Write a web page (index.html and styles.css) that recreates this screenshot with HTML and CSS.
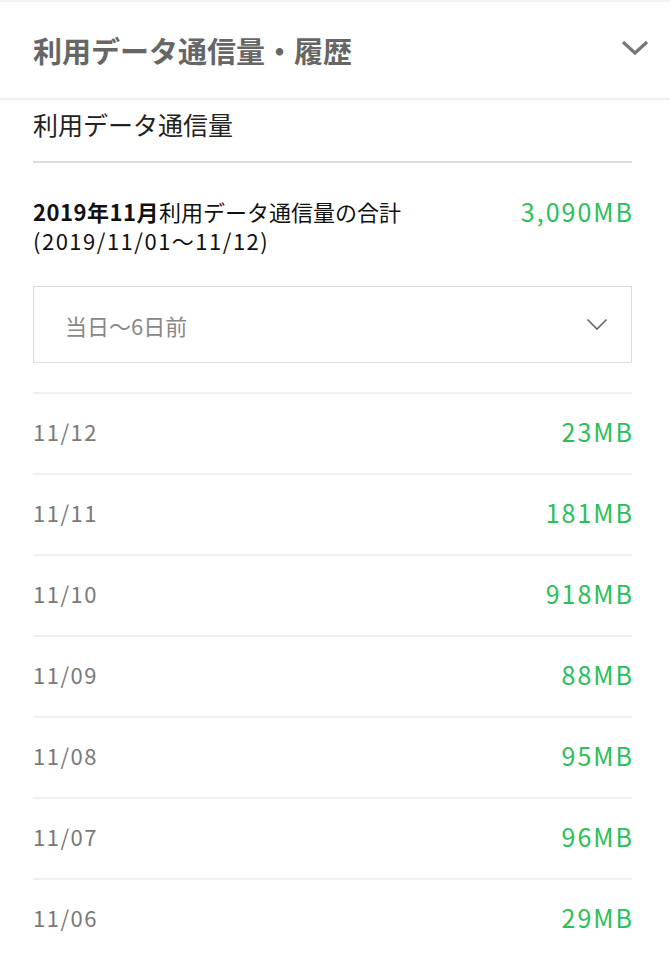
FILE: index.html
```html
<!DOCTYPE html>
<html lang="ja">
<head>
  <meta charset="UTF-8" />
  <meta name="viewport" content="width=device-width,initial-scale=1" />
  <title>利用データ通信量・履歴</title>
  <link rel="stylesheet" href="styles.css">
</head>
<body>
  <header class="panel-head">
    <h1>利用データ通信量・履歴</h1>
    <svg class="head-chevron" width="28" height="16" viewBox="0 0 28 16">
      <polyline points="2,2 14,13 26,2" fill="none" stroke="#777" stroke-width="3.2" />
    </svg>
  </header>

  <main class="usage">
    <h2 class="usage-title">利用データ通信量</h2>

    <div class="summary">
      <p class="summary-label"><b>2019年11月</b>利用データ通信量の合計<br><span class="period">(2019/11/01〜11/12)</span></p>
      <span class="amount total">3,090MB</span>
    </div>

    <div class="range-select">
      <span>当日〜6日前</span>
      <svg width="22" height="13" viewBox="0 0 22 13">
        <polyline points="1.5,1.5 11,11 20.5,1.5" fill="none" stroke="#666" stroke-width="1.6" />
      </svg>
    </div>

    <ul class="daily" id="dailyList"></ul>
  </main>

  <script>
    const days = [
      { date: "11/12", mb: 23 },
      { date: "11/11", mb: 181 },
      { date: "11/10", mb: 918 },
      { date: "11/09", mb: 88 },
      { date: "11/08", mb: 95 },
      { date: "11/07", mb: 96 },
      { date: "11/06", mb: 29 },
    ];

    const list = document.getElementById("dailyList");
    days.forEach(day => {
      const li = document.createElement("li");
      li.innerHTML = `
        <span class="date">${day.date}</span>
        <span class="amount">${day.mb}MB</span>
      `;
      list.appendChild(li);
    });
  </script>
</body>
</html>
```

FILE: styles.css
```css
body {
  margin: 0;
  font-family: "Noto Sans CJK JP", "Noto Sans", sans-serif;
  background: #fff;
  color: #222;
}

.panel-head {
  display: flex;
  align-items: center;
  justify-content: space-between;
  height: 96px;
  padding: 0 21px 0 33px;
  border-top: 2px solid #f4f4f4;
  border-bottom: 2px solid #eee;
}
.panel-head h1 {
  margin: 0;
  font-size: 29px;
  font-weight: bold;
  color: #666;
}
.head-chevron {
  margin-top: -4px;
}

.usage {
  padding: 0 38px 0 33px;
}
.usage-title {
  margin: 7px 0 0;
  padding-bottom: 20px;
  font-size: 25px;
  font-weight: normal;
  line-height: 34px;
  border-bottom: 2px solid #ddd;
}

.summary {
  display: flex;
  justify-content: space-between;
  align-items: flex-start;
  padding-top: 34px;
}
.summary-label {
  margin: 0;
  font-size: 22px;
  line-height: 29px;
  color: #111;
}
.summary-label b {
  letter-spacing: 0.5px;
}
.summary-label .period {
  letter-spacing: 1.5px;
}

.amount {
  color: #28c157;
  font-size: 25px;
  letter-spacing: 2px;
  margin-right: -2px;
}
.amount.total {
  line-height: 29px;
}

.range-select {
  display: flex;
  align-items: center;
  justify-content: space-between;
  height: 75px;
  margin-top: 31px;
  padding: 0 23px 0 31px;
  border: 1.5px solid #ddd;
  color: #888;
  font-size: 22px;
}

.daily {
  list-style: none;
  margin: 29px 0 0;
  padding: 0;
}
.daily li {
  display: flex;
  align-items: center;
  justify-content: space-between;
  box-sizing: border-box;
  height: 81px;
  padding-bottom: 6px;
  border-top: 2px solid #f0f0f0;
}
.daily .date {
  color: #7a7a7a;
  font-size: 22px;
  letter-spacing: 1.5px;
}
```
